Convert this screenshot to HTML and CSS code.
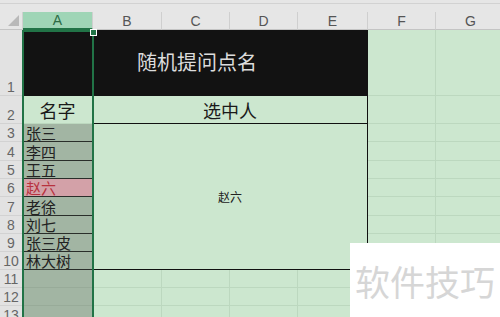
FILE: index.html
```html
<!DOCTYPE html>
<html lang="zh">
<head>
    <meta charset="UTF-8">
    <title>随机提问点名</title>
    <link rel="stylesheet" href="styles.css">
</head>
<body>

<div class="topbar"></div>

<div class="sheet">
    <!-- column headers -->
    <div class="corner"><span class="corner-tri"></span></div>
    <div class="col-head col-head-sel">A</div>
    <div class="col-head">B</div>
    <div class="col-head">C</div>
    <div class="col-head">D</div>
    <div class="col-head">E</div>
    <div class="col-head">F</div>
    <div class="col-head">G</div>

    <!-- row 1 -->
    <div class="row-head">1</div>
    <div class="cell dark"></div>
    <div class="cell dark title">随机提问点名</div>
    <div class="cell"></div>
    <div class="cell"></div>

    <!-- row 2 -->
    <div class="row-head">2</div>
    <div class="cell label">名字</div>
    <div class="cell label picked-head">选中人</div>
    <div class="cell"></div>
    <div class="cell"></div>

    <!-- row 3..10 -->
    <div class="row-head">3</div>
    <div class="cell name">张三</div>
    <div class="cell picked">赵六</div>
    <div class="cell"></div>
    <div class="cell"></div>

    <div class="row-head">4</div>
    <div class="cell name">李四</div>
    <div class="cell"></div>
    <div class="cell"></div>

    <div class="row-head">5</div>
    <div class="cell name">王五</div>
    <div class="cell"></div>
    <div class="cell"></div>

    <div class="row-head">6</div>
    <div class="cell name name-hit">赵六</div>
    <div class="cell"></div>
    <div class="cell"></div>

    <div class="row-head">7</div>
    <div class="cell name">老徐</div>
    <div class="cell"></div>
    <div class="cell"></div>

    <div class="row-head">8</div>
    <div class="cell name">刘七</div>
    <div class="cell"></div>
    <div class="cell"></div>

    <div class="row-head">9</div>
    <div class="cell name">张三皮</div>
    <div class="cell"></div>
    <div class="cell"></div>

    <div class="row-head">10</div>
    <div class="cell name">林大树</div>
    <div class="cell"></div>
    <div class="cell"></div>

    <!-- row 11..13 -->
    <div class="row-head">11</div>
    <div class="cell name-empty"></div>
    <div class="cell"></div><div class="cell"></div><div class="cell"></div><div class="cell"></div>
    <div class="cell"></div><div class="cell"></div>

    <div class="row-head">12</div>
    <div class="cell name-empty"></div>
    <div class="cell"></div><div class="cell"></div><div class="cell"></div><div class="cell"></div>
    <div class="cell"></div><div class="cell"></div>

    <div class="row-head">13</div>
    <div class="cell name-empty"></div>
    <div class="cell"></div><div class="cell"></div><div class="cell"></div><div class="cell"></div>
    <div class="cell"></div><div class="cell"></div>

    <!-- selection frame on column A -->
    <div class="selection"><span class="handle"></span></div>
</div>

<div class="watermark">软件技巧</div>

</body>
</html>
```

FILE: styles.css
```css
body {
    margin: 0;
    width: 500px;
    height: 317px;
    overflow: hidden;
    position: relative;
    background: #e6e6e6;
    font-family: "Liberation Sans", "Noto Sans CJK SC", sans-serif;
}
.topbar {
    height: 8px;
    margin-top: 3px;
    border-top: 1px solid #d2d2d2;
    background: #e6e6e6;
}
.sheet {
    position: relative;
    display: grid;
    grid-template-columns: 23px 70px 69px 68px 68px 70px 68px 70px;
    grid-template-rows: 18px 66px 28px 18px 19px 18px 18px 19px 18px 18px 18px 18px 18px 18px;
}
.corner {
    position: relative;
    border-right: 1px solid #d0d0d0;
    border-bottom: 1px solid #c4c4c4;
}
.corner-tri {
    position: absolute;
    right: 3px;
    bottom: 3px;
    width: 0;
    height: 0;
    border-left: 11px solid transparent;
    border-bottom: 11px solid #b9b9b9;
}
.col-head {
    display: flex;
    align-items: center;
    justify-content: center;
    font-size: 14px;
    color: #555;
    border-right: 1px solid #cfcfcf;
    border-bottom: 1px solid #c4c4c4;
}
.col-head-sel {
    background: #9fd5b6;
    color: #2d6b45;
    border-bottom: 2px solid #217346;
}
.row-head {
    display: flex;
    align-items: flex-end;
    justify-content: center;
    font-size: 14px;
    line-height: 16px;
    color: #666;
    background: #e2e2e2;
    border-right: 1px solid #c8c8c8;
    border-bottom: 1px solid #d2d2d2;
}
.cell {
    box-sizing: border-box;
    background: #cce7cf;
    border-right: 1px solid #bcd8bf;
    border-bottom: 1px solid #bcd8bf;
    font-family: "Noto Sans CJK SC", "Liberation Sans", sans-serif;
    line-height: 1;
    color: #222;
    overflow: hidden;
    white-space: nowrap;
}
.dark {
    background: #121212;
    border-color: #121212;
}
.title {
    grid-column: span 4;
    display: flex;
    align-items: center;
    padding-left: 44px;
    padding-bottom: 3px;
    font-size: 20px;
    color: #dcdcdc;
    border-right: 1px solid #121212;
    border-bottom: none;
}
.label {
    display: flex;
    align-items: center;
    justify-content: center;
    font-size: 18px;
    color: #1a1a1a;
}
.picked-head {
    grid-column: span 4;
    border-right: 1px solid #111;
    border-bottom: 1px solid #111;
}
.picked {
    grid-column: span 4;
    grid-row: span 8;
    display: flex;
    align-items: center;
    justify-content: center;
    font-size: 12px;
    border-right: 1px solid #111;
    border-bottom: 1px solid #111;
}
.name {
    display: flex;
    align-items: center;
    padding-left: 3px;
    font-size: 15px;
    background: #a2b5a3;
    border-bottom: 1px solid #2a2e2a;
}
.name-hit {
    background: #d3a1a8;
    color: #b8323e;
}
.name-empty {
    background: #a2b5a3;
    border-bottom: 1px solid #98ab99;
}
.selection {
    position: absolute;
    grid-column: 2 / 3;
    grid-row: 2 / -1;
    top: 0;
    bottom: 0;
    left: -1px;
    right: -1px;
    border: 2px solid #217346;
    pointer-events: none;
}
.handle {
    position: absolute;
    right: -5px;
    top: -3px;
    width: 5px;
    height: 5px;
    background: #217346;
    border: 1px solid #ffffff;
}
.watermark {
    position: absolute;
    left: 350px;
    top: 243px;
    width: 150px;
    height: 74px;
    background: #ffffff;
    display: flex;
    align-items: center;
    justify-content: center;
    font-family: "Noto Sans CJK SC", sans-serif;
    font-size: 35px;
    color: #d6d6d6;
}
```
